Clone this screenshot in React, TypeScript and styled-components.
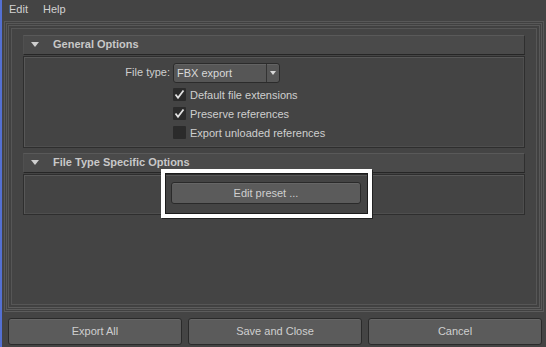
import React from 'react';
import styled, { createGlobalStyle } from 'styled-components';

const GlobalStyle = createGlobalStyle`
  * {
    box-sizing: border-box;
  }
  html, body {
    margin: 0;
    padding: 0;
    background: #444444;
  }
  body {
    border-left: 2px solid #5470d2;
    font-family: 'Liberation Sans', Arial, sans-serif;
    font-size: 11px;
    color: #cdcdcd;
  }
`;

const Window = styled.div`
  height: 347px;
  display: flex;
  flex-direction: column;
`;

const MenuBar = styled.div`
  height: 21px;
  display: flex;
  align-items: center;
  gap: 15px;
  padding: 0 0 3px 7px;
  color: #d2d2d2;
`;

const MenuItem = styled.span`
  cursor: default;
`;

const Frame = styled.div<{ $pad?: number }>`
  flex: 1;
  display: flex;
  flex-direction: column;
  border: 1px solid #585858;
  border-bottom-color: #5c5c5c;
  padding: ${p => p.$pad ?? 1}px;
  background: #414141;
`;

const OuterFrame = styled(Frame)`
  margin: 0 2px 0 2px;
`;

const Panel = styled.div`
  flex: 1;
  border: 1px solid #565656;
  background: #444444;
  padding: 6px 11px;
  display: flex;
  flex-direction: column;
`;

const Section = styled.div`
  display: flex;
  flex-direction: column;
  & + & {
    margin-top: 5px;
  }
`;

const SectionHeader = styled.div`
  height: 20px;
  display: flex;
  align-items: center;
  padding: 0 0 2px 7px;
  background: #4a4a4a;
  border-top: 1px solid #595959;
  border-left: 1px solid #505050;
  border-right: 1px solid #2f2f2f;
  border-bottom: 1px solid #262626;
  font-weight: bold;
  color: #c8c8c8;
`;

const Triangle = styled.span`
  width: 0;
  height: 0;
  border-left: 4.5px solid transparent;
  border-right: 4.5px solid transparent;
  border-top: 5px solid #cfcfcf;
  margin-right: 14px;
`;

const SectionBody = styled.div<{ $height: number }>`
  margin-top: 1px;
  height: ${p => p.$height}px;
  border: 1px solid #2e2e2e;
  box-shadow: inset 1px 1px 0 #585858, inset -1px -1px 0 #4e4e4e;
`;

const OptionsGrid = styled.div`
  display: grid;
  grid-template-columns: 146px 1fr;
  column-gap: 3px;
  row-gap: 6px;
  padding-top: 6px;
  align-items: center;
`;

const Label = styled.span`
  justify-self: end;
  color: #cfcfcf;
  margin-bottom: 1px;
`;

const Dropdown = styled.div`
  width: 107px;
  height: 20px;
  margin-bottom: -1px;
  display: flex;
  align-items: stretch;
  border: 1px solid #2b2b2b;
  border-radius: 3px;
  background: #565656;
  box-shadow: inset 0 1px 0 #636363;
  color: #d8d8d8;
`;

const DropdownText = styled.span`
  flex: 1;
  display: flex;
  align-items: center;
  padding: 0 0 1px 3px;
`;

const DropdownArrow = styled.span`
  width: 13px;
  border-left: 1px solid #333333;
  display: flex;
  align-items: center;
  justify-content: center;
  &::after {
    content: '';
    border-left: 3.5px solid transparent;
    border-right: 3.5px solid transparent;
    border-top: 4px solid #d8d8d8;
  }
`;

const CheckRow = styled.label`
  grid-column: 2;
  display: flex;
  align-items: center;
  gap: 4px;
  height: 13px;
  color: #cfcfcf;
`;

const Box = styled.span`
  width: 13px;
  height: 13px;
  background: #2b2b2b;
  border-radius: 1px;
  display: flex;
  align-items: center;
  justify-content: center;
`;

const ButtonArea = styled.div`
  display: flex;
  justify-content: flex-start;
  padding: 7px 0 0 147px;
`;

const Highlight = styled.div`
  position: relative;
  &::after {
    content: '';
    position: absolute;
    top: -13px;
    left: -10px;
    right: -11px;
    bottom: -14px;
    border: 4px solid #ffffff;
    box-shadow: inset 0 0 0 1px #1c1c1c, 1px 1px 0 #222222;
    pointer-events: none;
  }
`;

const Button = styled.button<{ $width?: number; $height: number }>`
  ${p => (p.$width ? `width: ${p.$width}px;` : 'flex: 1;')}
  height: ${p => p.$height}px;
  border: 1px solid #2a2a2a;
  border-radius: 3px;
  background: #5b5b5b;
  box-shadow: inset 0 1px 0 #666666;
  color: #cfcfcf;
  font-family: 'Liberation Sans', Arial, sans-serif;
  font-size: 11px;
  padding: 0 0 1px;
  cursor: default;
`;

const Footer = styled.div`
  height: 35px;
  display: flex;
  gap: 6px;
  padding: 6px 4px 2px 6px;
`;

const Check = ({ checked }: { checked: boolean }) => (
  <Box>
    {checked && (
      <svg width="11" height="11" viewBox="0 0 11 11">
        <path d="M1.5 5.5 L4 8.8 L9.5 1.5" fill="none" stroke="#e2e2e2" strokeWidth="1.8" />
      </svg>
    )}
  </Box>
);

const options = [
  { label: 'Default file extensions', checked: true },
  { label: 'Preserve references', checked: true },
  { label: 'Export unloaded references', checked: false },
];

export default function App() {
  return (
    <>
      <GlobalStyle />
      <Window>
        <MenuBar>
          <MenuItem>Edit</MenuItem>
          <MenuItem>Help</MenuItem>
        </MenuBar>
        <OuterFrame>
          <Frame>
            <Frame $pad={2}>
              <Panel>
                <Section>
                  <SectionHeader>
                    <Triangle />
                    General Options
                  </SectionHeader>
                  <SectionBody $height={92}>
                    <OptionsGrid>
                      <Label>File type:</Label>
                      <Dropdown>
                        <DropdownText>FBX export</DropdownText>
                        <DropdownArrow />
                      </Dropdown>
                      {options.map(o => (
                        <CheckRow key={o.label}>
                          <Check checked={o.checked} />
                          {o.label}
                        </CheckRow>
                      ))}
                    </OptionsGrid>
                  </SectionBody>
                </Section>
                <Section>
                  <SectionHeader>
                    <Triangle />
                    File Type Specific Options
                  </SectionHeader>
                  <SectionBody $height={41}>
                    <ButtonArea>
                      <Highlight>
                        <Button $width={190} $height={22}>Edit preset ...</Button>
                      </Highlight>
                    </ButtonArea>
                  </SectionBody>
                </Section>
              </Panel>
            </Frame>
          </Frame>
        </OuterFrame>
        <Footer>
          <Button $height={27}>Export All</Button>
          <Button $height={27}>Save and Close</Button>
          <Button $height={27}>Cancel</Button>
        </Footer>
      </Window>
    </>
  );
}
